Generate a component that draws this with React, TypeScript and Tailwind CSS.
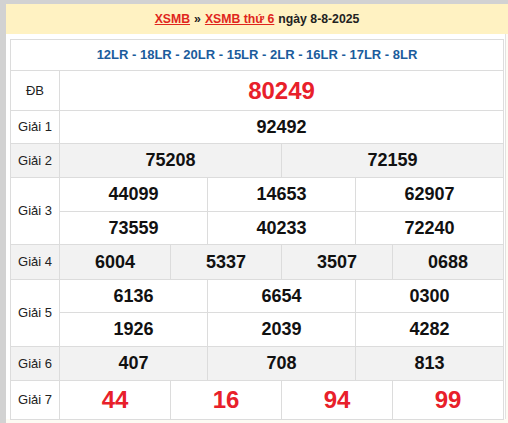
import React from "react";

const F = { fontFamily: '"Liberation Sans", Arial, sans-serif' };

function Label({ children, h, bg }: { children: React.ReactNode; h: string; bg?: boolean }) {
  return (
    <div
      className={`w-[49px] shrink-0 border-r border-b border-[#dcdcdc] flex items-center justify-center text-[13px] text-[#222] ${h} ${bg ? "bg-[#f2f2f2]" : "bg-white"}`}
    >
      {children}
    </div>
  );
}

function Cell({ children, h, bg, red, big }: { children: React.ReactNode; h: string; bg?: boolean; red?: boolean; big?: boolean }) {
  return (
    <div
      className={`flex-1 border-r border-b border-[#dcdcdc] flex items-center justify-center font-bold ${h} ${bg ? "bg-[#f2f2f2]" : "bg-white"} ${red ? "text-[#e8202a]" : "text-[#111]"} ${big ? "text-[24px]" : "text-[18px]"}`}
    >
      {children}
    </div>
  );
}

function Row({ label, nums, h, bg, red, big }: { label: string; nums: string[]; h: string; bg?: boolean; red?: boolean; big?: boolean }) {
  return (
    <div className="flex">
      <Label h={h} bg={bg}>{label}</Label>
      <div className="flex flex-1">
        {nums.map((n, i) => (
          <Cell key={i} h={h} bg={bg} red={red} big={big}>{n}</Cell>
        ))}
      </div>
    </div>
  );
}

function DoubleRow({ label, a, b, h1, h2 }: { label: string; a: string[]; b: string[]; h1: string; h2: string }) {
  return (
    <div className="flex">
      <div className="w-[49px] shrink-0 border-r border-b border-[#dcdcdc] flex items-center justify-center text-[13px] text-[#222] bg-white">
        {label}
      </div>
      <div className="flex flex-col flex-1">
        <div className="flex">
          {a.map((n, i) => (
            <Cell key={i} h={h1}>{n}</Cell>
          ))}
        </div>
        <div className="flex">
          {b.map((n, i) => (
            <Cell key={i} h={h2}>{n}</Cell>
          ))}
        </div>
      </div>
    </div>
  );
}

export default function App() {
  return (
    <div style={F} className="w-[508px] h-[423px] overflow-hidden bg-[#fdfbf3] border-l-[6px] border-t-[4px] border-[#d2d2d2]">
      <div className="h-[30px] bg-[#fff2c2] flex items-center justify-center text-[12.25px] font-bold text-[#222] pt-[1px]">
        <a className="text-[#e0261c] underline">XSMB</a>
        <span className="mx-[4px]">»</span>
        <a className="text-[#e0261c] underline">XSMB thứ 6</a>
        <span className="ml-[4px]">ngày 8-8-2025</span>
      </div>
      <div className="bg-white pt-[5px] h-[385px] w-[500px] border-r border-[#e2e2e2]">
        <div className="ml-[4px] w-[494px] border-t border-l border-[#dcdcdc]">
          <div className="h-[31px] border-r border-b border-[#dcdcdc] flex items-center justify-center text-[13px] font-bold text-[#1b5c9c]">
            12LR - 18LR - 20LR - 15LR - 2LR - 16LR - 17LR - 8LR
          </div>
          <Row label="ĐB" nums={["80249"]} h="h-[40px]" red big />
          <Row label="Giải 1" nums={["92492"]} h="h-[33px]" />
          <Row label="Giải 2" nums={["75208", "72159"]} h="h-[34px]" bg />
          <DoubleRow label="Giải 3" a={["44099", "14653", "62907"]} b={["73559", "40233", "72240"]} h1="h-[34px]" h2="h-[33px]" />
          <Row label="Giải 4" nums={["6004", "5337", "3507", "0688"]} h="h-[35px]" bg />
          <DoubleRow label="Giải 5" a={["6136", "6654", "0300"]} b={["1926", "2039", "4282"]} h1="h-[33px]" h2="h-[34px]" />
          <Row label="Giải 6" nums={["407", "708", "813"]} h="h-[34px]" bg />
          <Row label="Giải 7" nums={["44", "16", "94", "99"]} h="h-[39px]" red big />
        </div>
      </div>
    </div>
  );
}
